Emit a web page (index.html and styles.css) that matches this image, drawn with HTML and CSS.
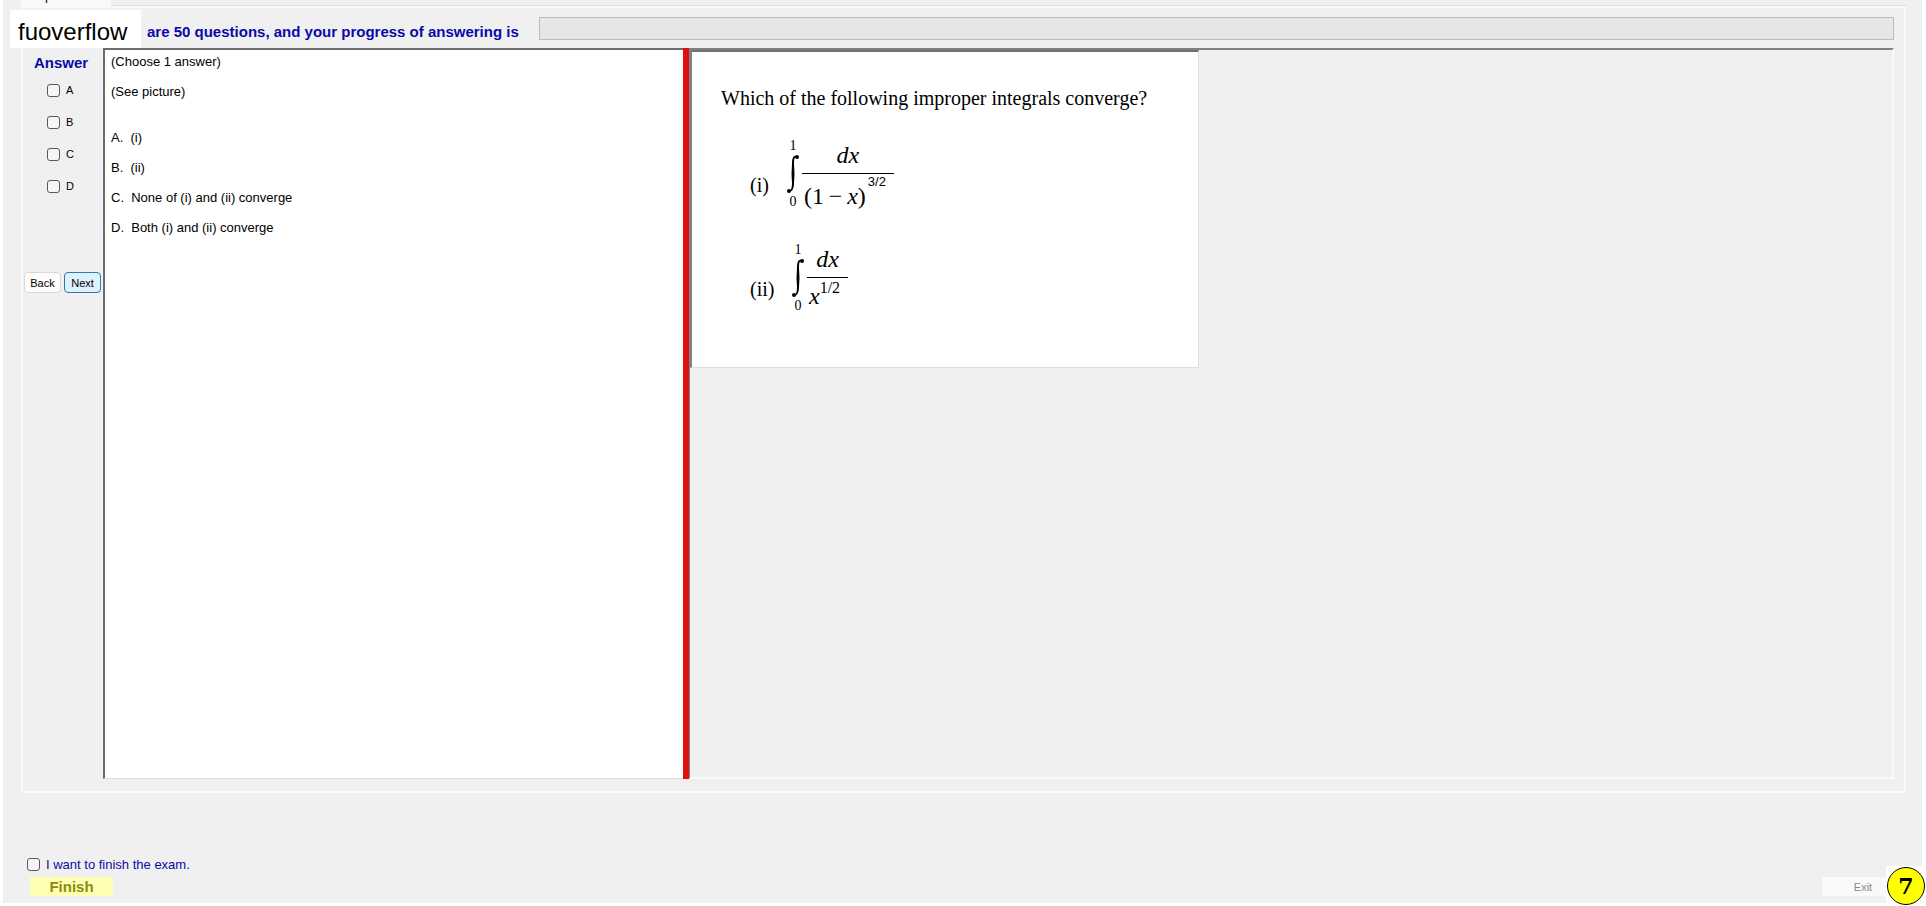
FILE: index.html
```html
<!DOCTYPE html>
<html lang="en">

<head>
  <meta charset="UTF-8">
  <title>Exam</title>
  <link rel="stylesheet" href="styles.css">
</head>

<body>
  <div class="window">
    <div class="tabs"><div class="tab"><p>p</p></div></div>
    <main class="exam">
      <div class="brand">fuoverflow</div>
      <header class="header">
        <span class="title" id="progress_label">are 50 questions, and your progress of answering is</span>
        <div class="progress" role="progressbar" aria-labelledby="progress_label"></div>
      </header>
      <div class="panels">
        <form class="answers">
          <div class="title">Answer</div>
          <div class="choices">
            <label><input type="checkbox" name="answer" value="A">A</label>
            <label><input type="checkbox" name="answer" value="B">B</label>
            <label><input type="checkbox" name="answer" value="C">C</label>
            <label><input type="checkbox" name="answer" value="D">D</label>
          </div>
          <div class="nav">
            <button type="button">Back</button>
            <button type="button" class="next">Next</button>
          </div>
        </form>
        <section class="question">
          <p>(Choose 1 answer)</p>
          <p>(See picture)</p>
          <div class="options">
            <p>A.&nbsp; (i)</p>
            <p>B.&nbsp; (ii)</p>
            <p>C.&nbsp; None of (i) and (ii) converge</p>
            <p>D.&nbsp; Both (i) and (ii) converge</p>
          </div>
        </section>
        <div class="splitter"></div>
        <section class="viewer">
          <div class="sheet">
            <p class="ask">Which of the following improper integrals converge?</p>
            <div class="formula">
              <span class="number">(i)</span>
              <div class="integral">
                <span>1</span>
                <svg width="14" height="40" viewBox="0 0 14 40">
                  <path d="M12 3C9 1 8 4 8 10L8.500 20L8 29C8 35 6 39 2 37C5 37 6 34 6 29L5.500 20L6 10C6 3 8 0 12 3Z" />
                  <circle cx="11" cy="3" r="2" />
                  <circle cx="3" cy="37" r="2" />
                </svg>
                <span>0</span>
              </div>
              <div class="fraction">
                <div class="top"><i>dx</i></div>
                <div class="bottom">(1&thinsp;−&thinsp;<i>x</i>)<span class="power small">3/2</span></div>
              </div>
            </div>
            <div class="formula short">
              <span class="number">(ii)</span>
              <div class="integral">
                <span>1</span>
                <svg width="14" height="40" viewBox="0 0 14 40">
                  <path d="M12 3C9 1 8 4 8 10L8.500 20L8 29C8 35 6 39 2 37C5 37 6 34 6 29L5.500 20L6 10C6 3 8 0 12 3Z" />
                  <circle cx="11" cy="3" r="2" />
                  <circle cx="3" cy="37" r="2" />
                </svg>
                <span>0</span>
              </div>
              <div class="fraction">
                <div class="top"><i>dx</i></div>
                <div class="bottom"><i>x</i><span class="power">1/2</span></div>
              </div>
            </div>
          </div>
        </section>
      </div>
    </main>
    <footer class="footer">
      <div>
        <label class="confirm"><input type="checkbox" name="finish">I want to finish the exam.</label>
        <button type="button" class="finish">Finish</button>
      </div>
      <button type="button" class="exit">Exit</button>
    </footer>
  </div>
  <div class="badge"><span>7</span></div>
</body>

</html>
```
FILE: styles.css
```css
* {
  box-sizing: border-box;
}

body {
  margin: 0;
  padding: 0 4px 3px 3px;
  background-color: white;
  font-family: "Liberation Sans", Arial, sans-serif;
  font-size: 13px;
  color: black;
}

p {
  margin: 0;
}

.window {
  display: flex;
  flex-direction: column;
  min-height: calc(100vh - 3px);
  padding: 0 16px 0 18px;
  background-color: #f0f0f0;
}

.tabs {
  height: 6px;
  border-bottom: 1px solid #e2e2e2;
}

/* the tab row is scrolled away, only its lower edge shows */
.tab {
  display: flex;
  align-items: flex-end;
  width: 90px;
  height: 6px;
  padding: 0 0 4px 24px;
  overflow: hidden;
  background-color: #fafafa;
  line-height: 13px;
}

.exam {
  flex: 1;
  display: flex;
  flex-direction: column;
  position: relative;
  padding: 0 10px 12px 0;
  border: 2px solid #fafafa;
}

/* site label, lies over the corner of the frame */
.brand {
  position: absolute;
  top: 2px;
  left: -13px;
  padding: 8px 14px 2px 8px;
  background-color: white;
  font-size: 24px;
  line-height: 28px;
}

.header {
  display: flex;
  align-items: flex-end;
  gap: 20px;
  height: 40px;
  padding: 0 0 8px 124px;
}

.title {
  font-size: 15px;
  font-weight: bold;
  line-height: 17px;
  color: #0a0aa8;
}

.progress {
  flex: 1;
  height: 23px;
  border: 1px solid #bcbcbc;
  background-color: #e6e6e6;
}

.panels {
  flex: 1;
  display: grid;
  grid-template-columns: 80px 580fr 6px 1205fr;
}

.answers .title {
  padding: 6px 4px 0 0;
  text-align: center;
}

.choices {
  margin-top: 7px;
}

.choices label {
  display: flex;
  align-items: center;
  gap: 6px;
  height: 32px;
  padding: 0 0 8px 24px;
  font-size: 11px;
}

input[type="checkbox"] {
  appearance: none;
  width: 13px;
  height: 13px;
  margin: 0;
  border: 1px solid #5a5a5a;
  border-radius: 3px;
  background-color: #f6f6f6;
}

.nav {
  display: flex;
  gap: 3px;
  margin-top: 66px;
  padding-left: 1px;
}

button {
  padding: 0;
  border: 1px solid #d8d8d8;
  border-radius: 4px;
  background-color: #fdfdfd;
  font-family: inherit;
  font-size: 11px;
  color: black;
}

.nav button {
  width: 37px;
  height: 21px;
}

.nav .next {
  border-color: #2d7ba8;
  background-color: #dff1fc;
}

.question {
  padding: 0 6px;
  border-top: 2px solid #6c6c6c;
  border-left: 2px solid #6c6c6c;
  border-bottom: 1px solid #dedede;
  background-color: white;
  line-height: 30px;
}

.question p:first-child {
  margin-top: -3px;
}

.options {
  margin-top: 16px;
}

.options p:first-child {
  margin-top: 0;
}

.splitter {
  background-color: #e01010;
}

.viewer {
  border-top: 2px solid #808080;
  border-left: 1px solid #808080;
  border-right: 2px solid #fafafa;
  border-bottom: 2px solid #fafafa;
}

.sheet {
  width: 509px;
  max-width: 100%;
  height: 318px;
  padding: 34px 0 0 29px;
  border-top: 2px solid #707070;
  border-left: 2px solid #808080;
  border-bottom: 1px solid #dedede;
  border-right: 1px solid #dedede;
  background-color: white;
  font-family: "Liberation Serif", "Times New Roman", serif;
  font-size: 20px;
  line-height: 24px;
}

.ask {
  white-space: nowrap;
}

.formula {
  display: flex;
  align-items: center;
  height: 76px;
  margin: 26px 0 0 29px;
}

.number {
  width: 36px;
  padding-top: 22px;
}

.integral {
  display: flex;
  flex-direction: column;
  align-items: center;
  gap: 1px;
  font-size: 14px;
  line-height: 14px;
}

.fraction {
  margin-left: 2px;
  font-size: 24px;
}

.top {
  height: 33px;
  padding-top: 2px;
  text-align: center;
  border-bottom: 1px solid black;
}

.bottom {
  display: flex;
  height: 34px;
  padding: 10px 4px 0 2px;
}

.power {
  margin-top: -14px;
  padding-right: 4px;
  font-size: 16px;
}

.power.small {
  padding-left: 2px;
  font-family: "Liberation Sans", Arial, sans-serif;
  font-size: 13px;
}

.short {
  margin-top: 28px;
}

.short .number {
  width: 41px;
}

.short .bottom {
  padding-top: 6px;
}

.short .power {
  margin-top: -8px;
}

.footer {
  display: flex;
  justify-content: space-between;
  align-items: flex-end;
  height: 110px;
  padding: 0 2px 7px 6px;
}

.confirm {
  display: flex;
  align-items: center;
  gap: 6px;
  margin-bottom: 5px;
  color: #0a0aa8;
}

.finish,
.exit {
  height: 19px;
  border: none;
  border-radius: 0;
}

.finish {
  width: 83px;
  margin-left: 3px;
  background-color: #ffffb4;
  font-size: 15px;
  font-weight: bold;
  color: #8c8c0a;
}

.exit {
  width: 82px;
  background-color: #f9f9f9;
  color: #8a8a8a;
}

.badge {
  position: absolute;
  right: 0;
  bottom: 0;
  padding: 1px;
  background-color: white;
}

.badge span {
  display: block;
  width: 38px;
  height: 38px;
  border: 1px solid black;
  border-radius: 50%;
  background-color: #ffff00;
  font: bold 22px/36px "DejaVu Serif", serif;
  text-align: center;
}
```
